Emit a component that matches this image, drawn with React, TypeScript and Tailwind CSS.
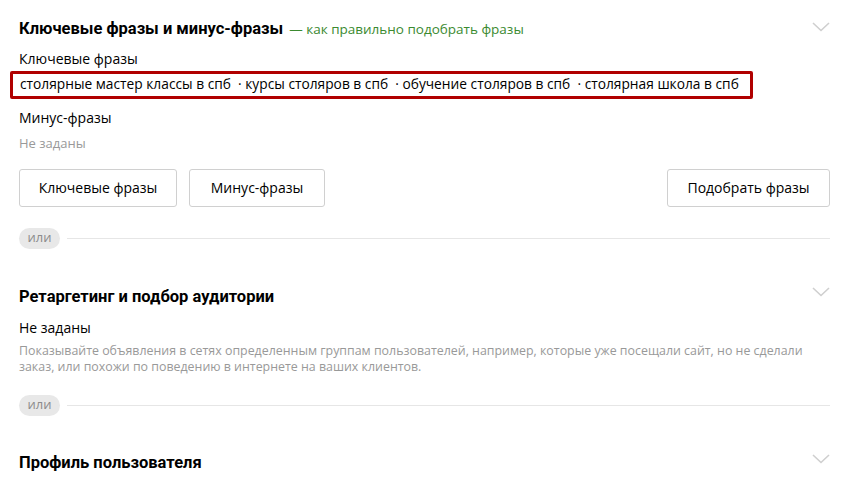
import React from "react";

const Chevron = () => (
  <svg width="18" height="10" viewBox="0 0 18 10" className="shrink-0">
    <path d="M1 1 L9 8.5 L17 1" fill="none" stroke="#cfcfcf" strokeWidth="1.6" />
  </svg>
);

const Or = () => (
  <div className="flex items-center gap-[7px]">
    <div className="h-[21px] w-[41px] rounded-full bg-[#e8e8e8] flex items-center justify-center text-[13px] text-[#8c8c8c] leading-none pb-[1px]">или</div>
    <div className="flex-1 h-px bg-[#e6e6e6]" />
  </div>
);

const Btn = ({ children, w }: { children: React.ReactNode; w: string }) => (
  <button className={`h-[38px] ${w} border border-[#d0d0d0] rounded-[3px] bg-white text-[14px] text-[#000] flex items-center justify-center`}>
    {children}
  </button>
);

export default function App() {
  return (
    <div className="w-[843px] h-[490px] overflow-hidden bg-white pl-[19px] pr-[13px] text-black" style={{ fontFamily: '"Open Sans", sans-serif' }}>
      <div className="pt-[17px] flex items-start justify-between">
        <div className="flex items-baseline">
          <span className="text-[16.5px] font-bold text-[#000]" style={{ fontFamily: 'Roboto, sans-serif' }}>Ключевые фразы и минус-фразы</span>
          <span className="ml-[6px] text-[13.5px] text-[#3b8a30]">— как правильно подобрать фразы</span>
        </div>
        <div className="pt-[5px] pr-[0px]"><Chevron /></div>
      </div>
      <div className="mt-[7px] text-[14px] leading-[20px]">Ключевые фразы</div>
      <div className="-ml-[9px] mt-[2px] w-[743px] h-[28px] border-[3px] border-[#b00000] rounded-[2px] flex items-center pl-[7px] text-[13.75px] whitespace-nowrap">
        столярные мастер классы в спб&nbsp; · курсы столяров в спб&nbsp; · обучение столяров в спб&nbsp; · столярная школа в спб
      </div>
      <div className="mt-[9px] text-[14px] leading-[20px]">Минус-фразы</div>
      <div className="mt-[6px] text-[13px] leading-[18px] text-[#999]">Не заданы</div>
      <div className="mt-[17px] flex gap-[12px]">
        <Btn w="w-[158px]">Ключевые фразы</Btn>
        <Btn w="w-[136px]">Минус-фразы</Btn>
        <div className="flex-1" />
        <Btn w="w-[163px]">Подобрать фразы</Btn>
      </div>
      <div className="mt-[21px]"><Or /></div>

      <div className="mt-[36px] flex items-start justify-between">
        <span className="text-[16.5px] font-bold leading-[24px]" style={{ fontFamily: 'Roboto, sans-serif' }}>Ретаргетинг и подбор аудитории</span>
        <div className="pt-[2px]"><Chevron /></div>
      </div>
      <div className="mt-[9px] text-[14px] leading-[20px]">Не заданы</div>
      <div className="mt-[5px] text-[12.4px] leading-[16px] text-[#999] pr-[10px]">
        Показывайте объявления в сетях определенным группам пользователей, например, которые уже посещали сайт, но не сделали заказ, или похожи по поведению в интернете на ваших клиентов.
      </div>
      <div className="mt-[20px]"><Or /></div>

      <div className="mt-[35px] flex items-start justify-between">
        <span className="text-[16.5px] font-bold leading-[24px]" style={{ fontFamily: 'Roboto, sans-serif' }}>Профиль пользователя</span>
        <div className="pt-[3px]"><Chevron /></div>
      </div>
      <div className="mt-[10px] text-[14px] leading-[20px]">Не заданы</div>
    </div>
  );
}
